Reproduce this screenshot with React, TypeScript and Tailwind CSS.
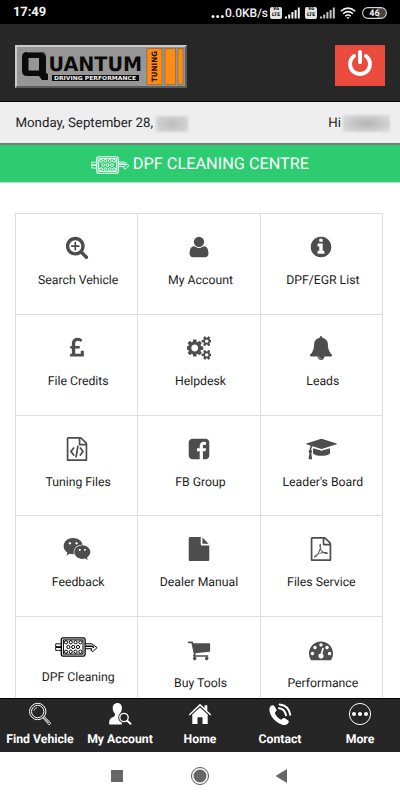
import type { ReactNode } from 'react'
import { FaWeixin } from 'react-icons/fa'

interface Tile {
  label: string
  icon: ReactNode
  flush?: boolean // no leading space before the label
  compact?: boolean // shorter cell content (image icon)
}

interface NavItem {
  label: string
  icon: ReactNode
}

const page =
  'M1596 380q28 28 48 76t20 88v1152q0 40-28 68t-68 28h-1344q-40 0-68-28t-28-68v-1600q0-40 28-68t68-28h896q40 0 88 20t76 48zm-444-244v376h376q-10-29-22-41l-313-313q-12-12-41-22zm384 1528v-1024h-416q-40 0-68-28t-28-68v-416h-768v1536h1280z'

const smallCog =
  'v140q0 16-149 31-12 27-30 52 51 113 51 138 0 4-4 7-122 71-124 71-8 0-46-47t-52-68q-20 2-30 2t-30-2q-14 21-52 68t-46 47q-2 0-124-71-4-3-4-7 0-25 51-138-18-25-30-52-149-15-149-31v-140q0-16 149-31 13-29 30-52-51-113-51-138 0-4 4-7 4-2 35-20t59-34 30-16q8 0 46 46.5t52 67.5q20-2 30-2t30 2q51-71 92-112l6-2q4 0 124 70 4 3 4 7 0 25-51 138 17 23 30 52 149 15 149 31z'

const paths = {
  searchPlus:
    'M1088 800v64q0 13-9.5 22.5t-22.5 9.5h-224v224q0 13-9.5 22.5t-22.5 9.5h-64q-13 0-22.5-9.5t-9.5-22.5v-224h-224q-13 0-22.5-9.5t-9.5-22.5v-64q0-13 9.5-22.5t22.5-9.5h224v-224q0-13 9.5-22.5t22.5-9.5h64q13 0 22.5 9.5t9.5 22.5v224h224q13 0 22.5 9.5t9.5 22.5zm128 32q0-185-131.5-316.5t-316.5-131.5-316.5 131.5-131.5 316.5 131.5 316.5 316.5 131.5 316.5-131.5 131.5-316.5zm512 832q0 53-37.5 90.5t-90.5 37.5q-54 0-90-38l-343-342q-179 124-399 124-143 0-273.5-55.5t-225-150-150-225-55.5-273.5 55.5-273.5 150-225 225-150 273.5-55.5 273.5 55.5 225 150 150 225 55.5 273.5q0 220-124 399l343 343q37 37 37 90z',
  user: 'M1600 1405q0 120-73 189.5t-194 69.5h-874q-121 0-194-69.5t-73-189.5q0-53 3.5-103.5t14-109 26.5-108.5 43-97.5 62-81 85.5-53.5 111.5-20q9 0 42 21.5t74.5 48 108 48 133.5 21.5 133.5-21.5 108-48 74.5-48 42-21.5q61 0 111.5 20t85.5 53.5 62 81 43 97.5 26.5 108.5 14 109 3.5 103.5zm-320-893q0 159-112.5 271.5t-271.5 112.5-271.5-112.5-112.5-271.5 112.5-271.5 271.5-112.5 271.5 112.5 112.5 271.5z',
  info: 'M1152 1376v-160q0-14-9-23t-23-9h-96v-512q0-14-9-23t-23-9h-320q-14 0-23 9t-9 23v160q0 14 9 23t23 9h96v320h-96q-14 0-23 9t-9 23v160q0 14 9 23t23 9h448q14 0 23-9t9-23zm-128-896v-160q0-14-9-23t-23-9h-192q-14 0-23 9t-9 23v160q0 14 9 23t23 9h192q14 0 23-9t9-23zm640 416q0 209-103 385.5t-279.5 279.5-385.5 103-385.5-103-279.5-279.5-103-385.5 103-385.5 279.5-279.5 385.5-103 385.5 103 279.5 279.5 103 385.5z',
  pound:
    'M1408 1123v381q0 14-9 23t-23 9h-960q-14 0-23-9t-9-23v-150q0-13 9.5-22.5t22.5-9.5h97v-383h-95q-14 0-23-9.5t-9-22.5v-131q0-14 9-23t23-9h95v-223q0-171 123.5-282t314.5-111q185 0 335 125 9 8 10 20.5t-7 22.5l-103 127q-9 11-22 12-13 2-23-7-5-5-26-19t-69-32-93-18q-85 0-137 47t-52 123v215h305q13 0 22.5 9t9.5 23v131q0 13-9.5 22.5t-22.5 9.5h-305v379h414v-181q0-13 9-22.5t23-9.5h162q14 0 23 9.5t9 22.5z',
  cogs:
    'M832 896q0-106-75-181t-181-75-181 75-75 181 75 181 181 75 181-75 75-181zm768 512q0-52-38-90t-90-38-90 38-38 90q0 53 37.5 90.5t90.5 37.5 90.5-37.5 37.5-90.5zm0-1024q0-52-38-90t-90-38-90 38-38 90q0 53 37.5 90.5t90.5 37.5 90.5-37.5 37.5-90.5zm-384 421v185q0 10-7 19.5t-16 10.5l-155 24q-11 35-32 76 34 48 90 115 7 11 7 20 0 12-7 19-23 30-82.5 89.5t-78.5 59.5q-11 0-21-7l-115-90q-37 19-77 31-11 108-23 155-7 24-30 24h-186q-11 0-20-7.5t-10-17.5l-23-153q-34-10-75-31l-118 89q-7 7-20 7-11 0-21-8-144-133-144-160 0-9 7-19 10-14 41-53t47-61q-23-44-35-82l-152-24q-10-1-17-9.5t-7-19.5v-185q0-10 7-19.5t16-10.5l155-24q11-35 32-76-34-48-90-115-7-11-7-20 0-12 7-20 22-30 82-89t79-59q11 0 21 7l115 90q34-18 77-32 11-108 23-154 7-24 30-24h186q11 0 20 7.5t10 17.5l23 153q34 10 75 31l118-89q8-7 20-7 11 0 21 8 144 133 144 160 0 8-7 19-12 16-42 54t-45 60q23 48 34 82l152 23q10 2 17 10.5t7 19.5zm640 533' +
    smallCog +
    'm0-1024' +
    smallCog,
  bell: 'M912 1696q0-16-16-16-59 0-101.5-42.5t-42.5-101.5q0-16-16-16t-16 16q0 73 51.5 124.5t124.5 51.5q16 0 16-16zm816-288q0 52-38 90t-90 38h-448q0 106-75 181t-181 75-181-75-75-181h-448q-52 0-90-38t-38-90q50-42 91-88t85-119.5 74.5-158.5 50-206 19.5-260q0-152 117-282.5t307-158.5q-8-19-8-39 0-40 28-68t68-28 68 28 28 68q0 20-8 39 190 28 307 158.5t117 282.5q0 139 19.5 260t50 206 74.5 158.5 85 119.5 91 88z',
  fileCode:
    page +
    'm-928-896q8-11 21-12.5t24 6.5l51 38q11 8 12.5 21t-6.5 24l-182 243 182 243q8 11 6.5 24t-12.5 21l-51 38q-11 8-24 6.5t-21-12.5l-226-301q-14-19 0-38zm802 301q14 19 0 38l-226 301q-8 11-21 12.5t-24-6.5l-51-38q-11-8-12.5-21t6.5-24l182-243-182-243q-8-11-6.5-24t12.5-21l51-38q11-8 24-6.5t21 12.5zm-620 461q-13-2-20.5-13t-5.5-24l138-831q2-13 13-20.5t24-5.5l63 10q13 2 20.5 13t5.5 24l-138 831q-2 13-13 20.5t-24 5.5z',
  facebook:
    'M1376 128q119 0 203.5 84.5t84.5 203.5v960q0 119-84.5 203.5t-203.5 84.5h-188v-595h199l30-232h-229v-148q0-56 23.5-84t91.5-28l122-1v-207q-63-9-178-9-136 0-217.5 80t-81.5 226v171h-200v232h200v595h-532q-119 0-203.5-84.5t-84.5-203.5v-960q0-119 84.5-203.5t203.5-84.5h960z',
  cap: 'M1774 836l18 316q4 69-82 128t-235 93.5-323 34.5-323-34.5-235-93.5-82-128l18-316 574 181q22 7 48 7t48-7zm530-324q0 23-22 31l-1120 352q-4 1-10 1t-10-1l-652-206q-43 34-71 111.5t-34 178.5q63 36 63 109 0 69-58 107l58 433q2 14-8 25-9 11-24 11h-192q-15 0-24-11-10-11-8-25l58-433q-58-38-58-107 0-73 65-111 11-207 98-330l-333-104q-22-8-22-31t22-31l1120-352q4-1 10-1t10 1l1120 352q22 8 22 31z',
  file: 'M1152 512v-472q22 14 36 28l408 408q14 14 28 36h-472zm-128 32q0 40 28 68t68 28h544v1056q0 40-28 68t-68 28h-1344q-40 0-68-28t-28-68v-1600q0-40 28-68t68-28h800v544z',
  filePdf:
    page +
    'm-514-593q33 26 84 56 59-7 117-7 147 0 177 49 16 22 2 52 0 1-1 2l-2 2v1q-6 38-71 38-48 0-115-20t-130-53q-221 24-392 83-153 262-242 262-15 0-28-7l-24-12q-1-1-6-5-10-10-6-36 9-40 56-91.5t132-96.5q14-9 23 6 2 2 2 4 52-85 107-197 68-136 104-262-24-82-30.5-159.5t6.5-127.5q11-40 42-40h22q23 0 35 15 18 21 9 68-2 6-4 8 1 3 1 8v30q-2 123-14 192 55 164 146 238zm-576 411q52-24 137-158-51 40-87.5 84t-49.5 74zm398-920q-15 42-2 132 1-7 7-44 0-3 7-43 1-4 4-8-1-1-1-2t-1-2-1-3q-1-22-13-36 0 1-1 2v2zm-124 661q135-54 284-81-2-1-13-9.5t-16-13.5q-76-67-127-176-27 86-83 197-30 56-45 83zm646-16q-24-24-140-24 76 28 124 28 14 0 18-1 0-1-2-3z',
  cart: 'M704 1536q0 52-38 90t-90 38-90-38-38-90 38-90 90-38 90 38 38 90zm896 0q0 52-38 90t-90 38-90-38-38-90 38-90 90-38 90 38 38 90zm128-1088v512q0 24-16.5 42.5t-40.5 21.5l-1044 122q13 60 13 70 0 16-24 64h920q26 0 45 19t19 45-19 45-45 19h-1024q-26 0-45-19t-19-45q0-11 8-31.5t16-36 21.5-40 15.5-29.5l-177-823h-204q-26 0-45-19t-19-45 19-45 45-19h256q16 0 28.5 6.5t19.5 15.5 13 24.5 8 26 5.5 29.5 4.5 26h1201q26 0 45 19t19 45z',
  gauge:
    'M384 1152q0-53-37.5-90.5t-90.5-37.5-90.5 37.5-37.5 90.5 37.5 90.5 90.5 37.5 90.5-37.5 37.5-90.5zm192-448q0-53-37.5-90.5t-90.5-37.5-90.5 37.5-37.5 90.5 37.5 90.5 90.5 37.5 90.5-37.5 37.5-90.5zm428 481l101-382q6-26-7.5-48.5t-38.5-29.5-48 6.5-30 39.5l-101 382q-60 5-107 43.5t-63 98.5q-20 77 20 146t117 89 146-20 89-117q16-60-6-117t-72-91zm660-33q0-53-37.5-90.5t-90.5-37.5-90.5 37.5-37.5 90.5 37.5 90.5 90.5 37.5 90.5-37.5 37.5-90.5zm-640-640q0-53-37.5-90.5t-90.5-37.5-90.5 37.5-37.5 90.5 37.5 90.5 90.5 37.5 90.5-37.5 37.5-90.5zm448 192q0-53-37.5-90.5t-90.5-37.5-90.5 37.5-37.5 90.5 37.5 90.5 90.5 37.5 90.5-37.5 37.5-90.5zm320 448q0 261-141 483-19 29-54 29h-1402q-35 0-54-29-141-221-141-483 0-182 71-348t191-286 286-191 348-71 348 71 286 191 191 286 71 348z',
  power:
    'M1664 896q0 156-61 298t-164 245-245 164-298 61-298-61-245-164-164-245-61-298q0-182 80.5-343t226.5-270q43-32 95.5-25t83.5 50q32 42 24.5 94.5t-49.5 84.5q-98 74-151.5 181t-53.5 228q0 104 40.5 198.5t109.5 163.5 163.5 109.5 198.5 40.5 198.5-40.5 163.5-109.5 109.5-163.5 40.5-198.5q0-121-53.5-228t-151.5-181q-42-32-49.5-84.5t24.5-94.5q31-43 84-50t95 25q146 109 226.5 270t80.5 343zm-640-768v640q0 52-38 90t-90 38-90-38-38-90v-640q0-52 38-90t90-38 90 38 38 90z',
}

function Glyph({ d, wide }: { d: string; wide?: boolean }) {
  return (
    <svg
      viewBox={wide ? '0 0 2304 1792' : '0 0 1792 1792'}
      className={wide ? 'h-6 w-[31px]' : 'h-6 w-6'}
      fill="currentColor"
    >
      <path d={d} />
    </svg>
  )
}

function FilterIcon({ className }: { className: string }) {
  const holes = [
    [11, 5.3], [15.8, 5.3], [20.6, 5.3], [25.4, 5.3],
    [13.4, 10], [18.2, 10], [23, 10],
    [11, 14.7], [15.8, 14.7], [20.6, 14.7], [25.4, 14.7],
  ]
  return (
    <svg viewBox="0 0 43 20" className={className} fill="none" stroke="currentColor">
      <rect x="6.3" y="0.8" width="23.8" height="18.4" rx="1.8" strokeWidth="1.3" />
      <rect x="8.4" y="2.9" width="19.6" height="14.2" strokeWidth="1" />
      {holes.map(([x, y]) => (
        <circle key={`${x}-${y}`} cx={x} cy={y} r="1.6" strokeWidth="1" />
      ))}
      <path d="M6 6.8H.7v6.6H6" strokeWidth="0.9" />
      <path d="M1 10.1h5.5" strokeWidth="1.8" />
      <path d="M30.5 6.8h6.3l5.3 3.8-4.3 4-1.9-1.3.9-1.6h-6.3" strokeWidth="1" />
      <path d="M30.5 9.2h6.5l2 1.4" strokeWidth="1.5" />
    </svg>
  )
}

const tiles: Tile[] = [
  { label: 'Search Vehicle', icon: <Glyph d={paths.searchPlus} /> },
  { label: 'My Account', icon: <Glyph d={paths.user} /> },
  { label: 'DPF/EGR List', icon: <Glyph d={paths.info} /> },
  { label: 'File Credits', icon: <Glyph d={paths.pound} /> },
  { label: 'Helpdesk', icon: <Glyph d={paths.cogs} /> },
  { label: 'Leads', icon: <Glyph d={paths.bell} /> },
  { label: 'Tuning Files', icon: <Glyph d={paths.fileCode} /> },
  { label: 'FB Group', icon: <Glyph d={paths.facebook} /> },
  { label: "Leader's Board", icon: <Glyph d={paths.cap} wide /> },
  { label: 'Feedback', icon: <FaWeixin className="h-7 w-7" /> },
  { label: 'Dealer Manual', icon: <Glyph d={paths.file} />, flush: true },
  { label: 'Files Service', icon: <Glyph d={paths.filePdf} />, flush: true },
  { label: 'DPF Cleaning', icon: <FilterIcon className="h-5 w-[43px] text-black" />, compact: true },
  { label: 'Buy Tools', icon: <Glyph d={paths.cart} /> },
  { label: 'Performance', icon: <Glyph d={paths.gauge} /> },
]

const navItems: NavItem[] = [
  {
    label: 'Find Vehicle',
    icon: (
      <svg viewBox="0 0 24 24" className="h-6 w-6" fill="none" stroke="white">
        <circle cx="9.7" cy="9.5" r="8.2" strokeWidth="1" />
        <circle cx="9.7" cy="9.5" r="6.2" strokeWidth="1" />
        <path d="M5.8 9a4 4 0 0 1 3.4-3.5" strokeWidth="0.7" />
        <path d="M14.8 15.8l1.4-1.4 6 6.2q.6.9-.2 1.6t-1.6.1zM16.5 16.2l4.2 4.5" strokeWidth="0.9" />
      </svg>
    ),
  },
  {
    label: 'My Account',
    icon: (
      <svg viewBox="0 0 24 24" className="h-6 w-6">
        <path
          d="M9.3 1c3.1 0 4.7 2.2 4.6 5 0 2.5-1 4.3-2 5.5-.3 1.8.3 2.5 2 3.2v7.8H1.3c-.4-3.3.2-5.7 2.3-6.7 2.5-.9 3.9-1.7 3.3-4.2C5.6 10.2 4.7 8.4 4.7 6c0-2.8 1.5-5 4.6-5z"
          fill="white"
        />
        <circle cx="16" cy="15.5" r="5.7" fill="#262626" />
        <circle cx="16" cy="15.5" r="4.2" fill="#262626" stroke="white" strokeWidth="1.3" />
        <path d="M19.2 18.8l3.3 3" stroke="white" strokeWidth="2" strokeLinecap="round" />
      </svg>
    ),
  },
  {
    label: 'Home',
    icon: (
      <svg viewBox="0 0 24 24" className="h-6 w-6" fill="white">
        <path d="M12 1.8l4.5 4.3V3.2h2.8v5.5l3.9 3.7-.9 1L12 3.9 1.7 13.4l-.9-1z" />
        <path d="M12 5.5l7.7 7.1v9.4h-5.2v-6.8h-5V22H4.3v-9.4z" />
      </svg>
    ),
  },
  {
    label: 'Contact',
    icon: (
      <svg viewBox="0 0 24 24" className="h-6 w-6">
        <path
          d="M2.3 4.5C3.6 2.9 5.5 2.7 6.3 4l2 3.2c.6 1 .2 1.9-.8 2.8-.8.7-.8 1.2-.3 2.1 1.3 2.3 2.7 3.7 4.8 5.1.9.6 1.4.5 2.1-.3.8-1 1.7-1.3 2.7-.7l3.2 2c1.2.8 1 2.3-.3 3.5-2.3 2-5.3 1.5-8.4-.2C6.8 18.9 3.5 15.4 2 11c-.8-2.6-.9-4.8.3-6.5z"
          fill="white"
        />
        <path d="M11 6.2q5.8.7 7 7M11.6 2.4q9.2 1 10.6 10.3" fill="none" stroke="white" strokeWidth="2" strokeLinecap="round" />
      </svg>
    ),
  },
  {
    label: 'More',
    icon: (
      <svg viewBox="0 0 24 24" className="h-6 w-6" fill="white">
        <circle cx="12" cy="12" r="10.6" fill="none" stroke="white" strokeWidth="1" />
        <circle cx="6" cy="12" r="2" />
        <circle cx="12" cy="12" r="2" />
        <circle cx="18" cy="12" r="2" />
      </svg>
    ),
  },
]

function VolteBadge() {
  return (
    <div className="flex h-3 w-3 flex-col items-center rounded-[2px] bg-[#e4e4e4] pt-[0.5px] text-[5px] leading-[5.5px] font-black text-[#111]">
      <span>Vo</span>
      <span>LTE</span>
    </div>
  )
}

function Signal({ dim }: { dim?: boolean }) {
  return (
    <svg viewBox="0 0 15 12" className="h-3 w-[15px]" fill={dim ? '#c4c4c4' : '#f2f2f2'}>
      <rect x="0" y="9.5" width="2" height="2" />
      <rect x="3.2" y="7.5" width="2" height="4" />
      <rect x="6.4" y="5" width="2" height="6.5" />
      <rect x="9.6" y="3" width="2" height="8.5" />
      <rect x="12.8" y="0.5" width="2" height="11" />
    </svg>
  )
}

function StatusBar() {
  return (
    <div className="flex h-6 items-center bg-black px-[13px] pt-px text-[#f2f2f2]">
      <span className="text-[13px] font-bold tracking-[-0.1px]">17:49</span>
      <div className="ml-auto flex items-center">
        <svg viewBox="0 0 14 12" className="h-3 w-[14px]" fill="currentColor">
          <circle cx="2" cy="9.5" r="1.5" />
          <circle cx="6.7" cy="9.5" r="1.5" />
          <circle cx="11.4" cy="9.5" r="1.5" />
        </svg>
        <span className="w-[43px] text-[12px] font-medium whitespace-nowrap">0.0KB/s</span>
        <div className="ml-[2px] flex items-center gap-[3px]">
          <VolteBadge />
          <Signal />
        </div>
        <div className="ml-[5px] flex items-center gap-[3px]">
          <VolteBadge />
          <Signal dim />
        </div>
        <svg viewBox="0 0 16 12" className="ml-[5px] h-3 w-4" fill="none" stroke="currentColor" strokeWidth="1.5">
          <path d="M.7 4.3Q8-2 15.3 4.3M3 6.8q5-4.3 10 0M5.3 9.2q2.7-2.2 5.4 0" />
          <path d="M6.3 10.2h3.4L8 12z" fill="currentColor" stroke="none" />
        </svg>
        <svg viewBox="0 0 25 12" className="ml-[6px] h-3 w-[25px]">
          <path d="M15 1h4a5 5 0 0 1 0 10h-4z" fill="#444" />
          <rect x="0.6" y="0.6" width="23.8" height="10.8" rx="5.4" fill="none" stroke="#d5d5d5" strokeWidth="1.1" />
          <text x="12.5" y="9.3" textAnchor="middle" fontSize="9" fontWeight="700" fill="#f2f2f2">46</text>
        </svg>
      </div>
    </div>
  )
}

function Logo() {
  return (
    <svg viewBox="0 0 172 43" className="h-[43px] w-[172px]" fontFamily="'DejaVu Sans', sans-serif" fontWeight="bold">
      <rect width="172" height="43" fill="#5c5c5c" />
      <path d="M0 0h172l-2 2H2v39l-2 2z" fill="#c9c9c9" />
      <rect x="2" y="2" width="168" height="39" fill="#969696" />
      <path
        d="M12 7h14q5 0 5 5v16l2 1v6h-6l-3-4H12q-5 0-5-5V12q0-5 5-5zm1.5 6v12.5H24V13z"
        fill="#0b0b0b"
        fillRule="evenodd"
      />
      <path d="M12 7.5h14q4 0 4.5 4" fill="none" stroke="#555" strokeWidth="0.8" />
      <text x="33.5" y="26" fontSize="20" textLength="93.5" lengthAdjust="spacingAndGlyphs" fill="#0b0b0b">UANTUM</text>
      <rect x="37" y="30" width="87" height="6" fill="#0b0b0b" />
      <text x="39" y="35.2" fontSize="5.5" textLength="82" lengthAdjust="spacingAndGlyphs" fill="#f0f0f0">DRIVING PERFORMANCE</text>
      <g fill="#ff8c12" stroke="#8a5a25" strokeWidth="0.6">
        <rect x="132" y="3.5" width="15" height="36" />
        <rect x="150" y="3.5" width="10.5" height="36" />
        <rect x="163" y="3.5" width="5" height="36" />
      </g>
      <text transform="translate(142 37) rotate(-90)" fontSize="7.5" textLength="31" lengthAdjust="spacingAndGlyphs" fill="#1c1005">TUNING</text>
    </svg>
  )
}

export default function App() {
  return (
    <div className="flex h-[800px] w-[400px] flex-col overflow-hidden bg-white font-[Roboto,sans-serif] [text-rendering:geometricPrecision]">
      <StatusBar />

      <header className="flex h-[78px] shrink-0 items-start justify-between border-b border-black bg-[#272727] pt-[21px] pr-[15px] pl-[15px]">
        <Logo />
        <button className="flex h-[41px] w-[50px] items-center justify-center bg-[#e94b3c] pb-[3px] text-white">
          <svg viewBox="0 0 1792 1792" className="h-7 w-7" fill="currentColor">
            <path d={paths.power} />
          </svg>
        </button>
      </header>

      <div className="flex h-[41px] shrink-0 items-center bg-[#eee] pt-[2px] pr-[10px] pl-[15.5px] text-[13.25px] text-[#222]">
        <span>Monday, September 28,</span>
        <span className="ml-[3px] h-4 w-8 bg-radial from-[#bcbcbc] to-[#dadada] blur-[1px]" />
        <span className="ml-auto">Hi</span>
        <span className="ml-[2px] h-[17px] w-[47px] bg-radial from-[#b4b4b4] to-[#e0e0e0] blur-[1px]" />
      </div>

      <div className="flex h-[40px] shrink-0 items-center justify-center border-t-2 border-b border-t-[#6c7f72] border-b-[#a5e8c1] bg-[#2ecc71] pt-px text-white">
        <FilterIcon className="mt-[2px] h-[18px] w-[39px]" />
        <span className="ml-[3px] text-[16.3px]">DPF CLEANING CENTRE</span>
      </div>

      <main className="min-h-0 flex-1 overflow-hidden pt-[30px] pl-[15px]">
        <div className="grid w-[368px] auto-rows-[100.8px] grid-cols-3 border-t border-l border-[#ddd]">
          {tiles.map((tile) => (
            <div key={tile.label} className="flex flex-col items-center border-r border-b border-[#ddd]">
              <div
                className={
                  tile.compact
                    ? 'mt-[20px] flex h-5 items-center'
                    : 'mt-[18px] flex h-[30px] items-center text-[#4d4d4d]'
                }
              >
                {tile.icon}
              </div>
              <span
                className={`text-[12.25px] leading-5 whitespace-nowrap text-[#1c1c1c] ${tile.compact ? 'mt-[10px]' : 'mt-[8px]'} ${tile.flush ? '' : 'pl-[3px]'}`}
              >
                {tile.label}
              </span>
            </div>
          ))}
        </div>
      </main>

      <nav className="grid h-[54px] shrink-0 grid-cols-5 border-t border-black bg-[#262626] pt-[3px] text-white">
        {navItems.map((item) => (
          <div key={item.label} className="flex flex-col items-center">
            {item.icon}
            <span className="mt-[3px] text-[12.25px] leading-5 font-bold whitespace-nowrap">{item.label}</span>
          </div>
        ))}
      </nav>

      <div className="flex h-12 shrink-0 items-center justify-center bg-white">
        <svg viewBox="0 0 180 20" className="mr-[2px] h-5 w-[180px]" fill="#666">
          <rect x="2" y="4" width="12" height="12" />
          <circle cx="91" cy="10" r="6.5" />
          <circle cx="91" cy="10" r="8.5" fill="none" stroke="#555" strokeWidth="1" />
          <path d="M166.5 10l11.5-7v14z" />
        </svg>
      </div>
    </div>
  )
}
